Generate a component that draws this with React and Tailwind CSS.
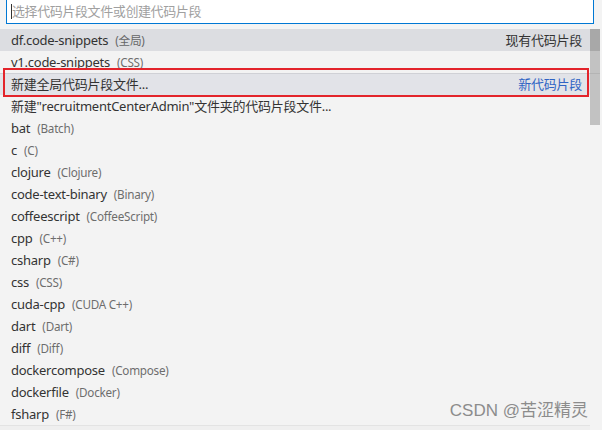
import React from 'react';

const items = [
  { label: 'bat', desc: 'Batch' },
  { label: 'c', desc: 'C' },
  { label: 'clojure', desc: 'Clojure' },
  { label: 'code-text-binary', desc: 'Binary' },
  { label: 'coffeescript', desc: 'CoffeeScript' },
  { label: 'cpp', desc: 'C++' },
  { label: 'csharp', desc: 'C#' },
  { label: 'css', desc: 'CSS' },
  { label: 'cuda-cpp', desc: 'CUDA C++' },
  { label: 'dart', desc: 'Dart' },
  { label: 'diff', desc: 'Diff' },
  { label: 'dockercompose', desc: 'Compose' },
  { label: 'dockerfile', desc: 'Docker' },
  { label: 'fsharp', desc: 'F#' },
];

function Row({ label, desc, right, rightClass = 'text-[#333]', className = '' }) {
  return (
    <div className={`h-[22px] flex items-center pt-px pl-[11px] pr-[8px] tracking-[-0.25px] ${className}`}>
      <span className="text-[13px] text-[#333] whitespace-nowrap">{label}</span>
      {desc && <span className="ml-[7px] text-[11.7px] text-[#333] opacity-70 whitespace-nowrap">({desc})</span>}
      {right && <span className={`ml-auto text-[13px] whitespace-nowrap ${rightClass}`}>{right}</span>}
    </div>
  );
}

export default function App() {
  return (
    <div
      className="relative w-[602px] h-[430px] overflow-hidden bg-[#f3f3f3]"
      style={{ fontFamily: '"Noto Sans", "Noto Sans CJK SC", sans-serif' }}
    >
      <div className="px-[6px] pr-[8px]">
        <div className="-mt-px h-[25px] bg-white border border-[#0078d4] flex items-center pl-[4px]">
          <span className="w-px h-[15px] bg-[#333]" />
          <span className="text-[13px] text-[#a0a0a0] tracking-[-0.4px]">选择代码片段文件或创建代码片段</span>
        </div>
      </div>

      <div className="flex mt-[5px]">
        <div className="w-[590px]">
          <Row label="df.code-snippets" desc="全局" right="现有代码片段" className="bg-[#dcdde1]" />
          <Row label="v1.code-snippets" desc="CSS" />
          <Row
            label="新建全局代码片段文件..."
            right="新代码片段"
            rightClass="text-[#2f63c4]"
            className="bg-[#e2e3e8] shadow-[inset_0_1px_0_#d0d1d6]"
          />
          <Row label={'新建"recruitmentCenterAdmin"文件夹的代码片段文件...'} />
          {items.map((it) => (
            <Row key={it.label} label={it.label} desc={it.desc} />
          ))}
          <div className="h-[6px] border-t border-[#e3e3e3] bg-[#efefef]" />
        </div>
        <div className="w-[10px] flex flex-col">
          <div className="h-[22px] bg-[#a8a8a8]" />
          <div className="h-[22px] bg-[#c2c2c2]" />
          <div className="h-px bg-[#b4b4b4]" />
          <div className="h-[51px] bg-[#c2c2c2]" />
        </div>
      </div>

      <div className="absolute left-[3px] top-[68px] w-[586px] h-[29px] border-2 border-[#e3242b]" />

      <div
        className="absolute right-[14px] top-[398px] text-[17px] text-[#8c8c8c]"
        style={{ fontFamily: '"Liberation Sans", "Noto Sans CJK SC", sans-serif' }}
      >
        CSDN @苦涩精灵
      </div>
    </div>
  );
}
